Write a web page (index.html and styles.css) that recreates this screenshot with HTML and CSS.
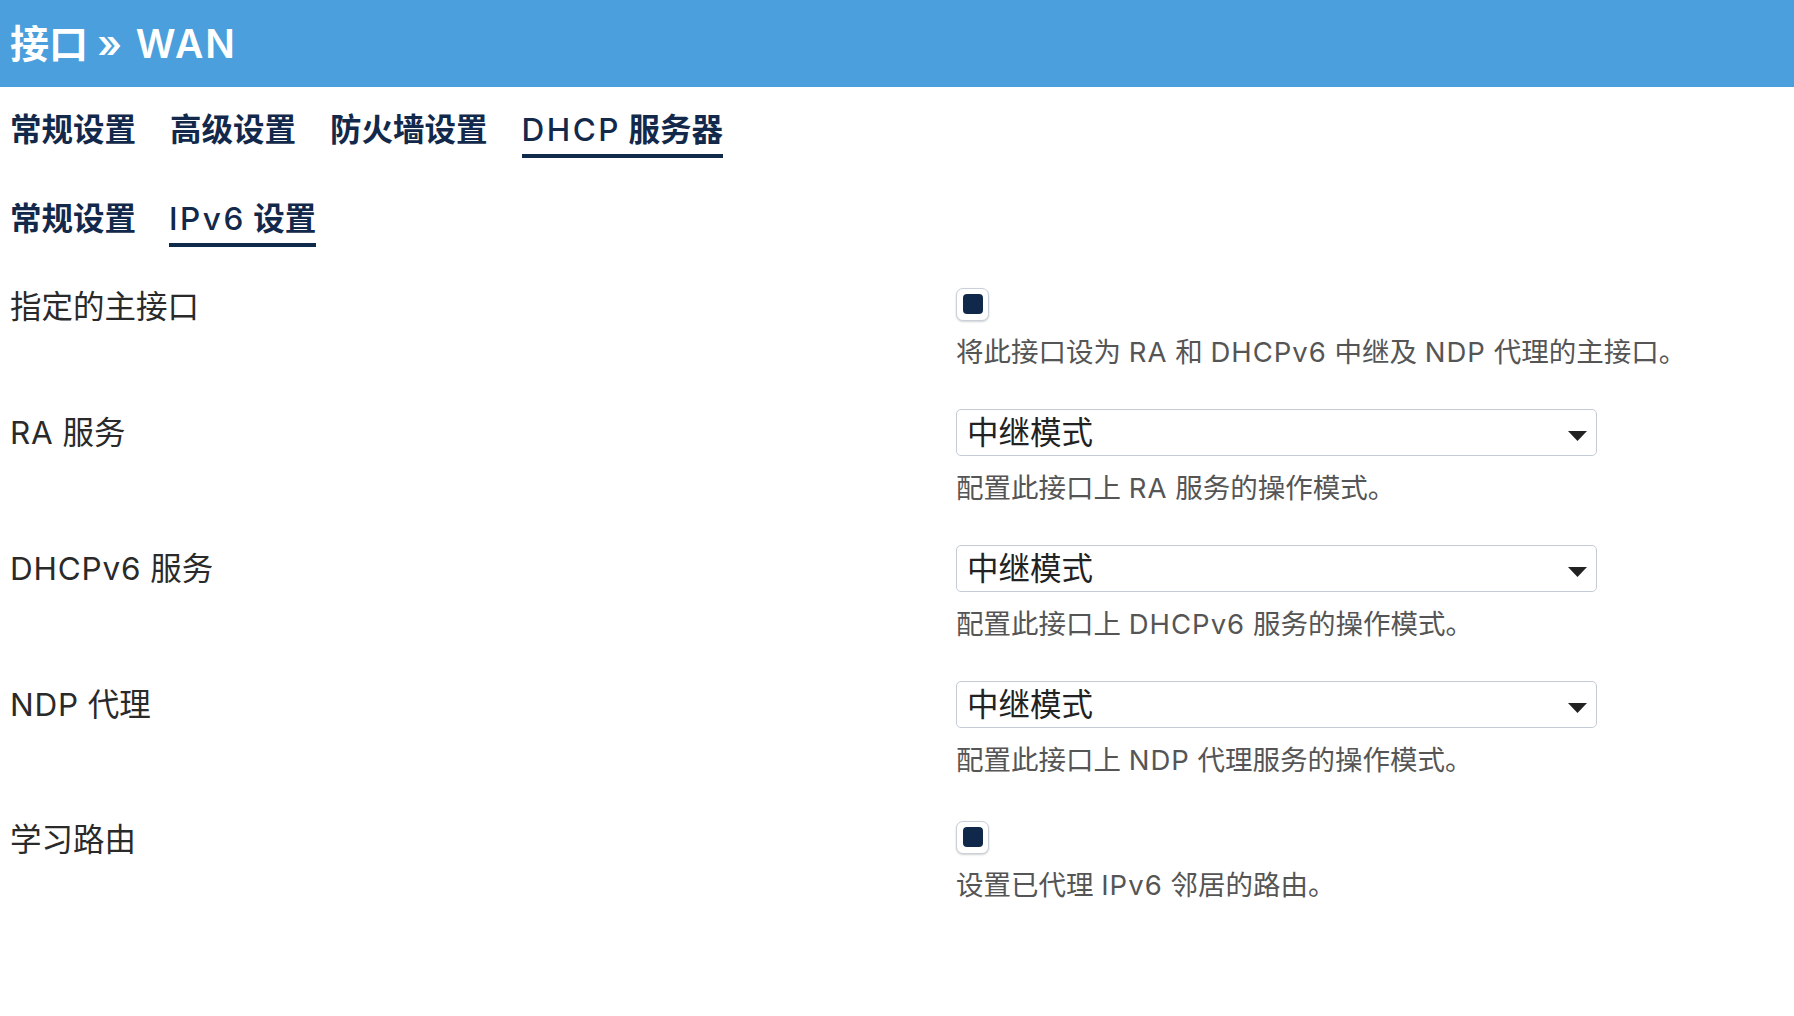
FILE: index.html
```html
<!DOCTYPE html>
<html lang="zh-CN">
<head>
<meta charset="utf-8">
<title>接口 » WAN</title>
<link rel="stylesheet" href="styles.css">
</head>
<body>
<header class="top">
  <h1 class="title">接口 <span class="title-lat">» WAN</span></h1>
</header>
<main class="page">
  <nav class="tabs main-tabs">
    <a class="tab">常规设置</a>
    <a class="tab">高级设置</a>
    <a class="tab">防火墙设置</a>
    <a class="tab active"><span class="lat">DHCP</span> 服务器</a>
  </nav>
  <nav class="tabs sub-tabs">
    <a class="tab">常规设置</a>
    <a class="tab active"><span class="lat">IPv6</span> 设置</a>
  </nav>
  <div class="form">
    <div class="row check-row">
      <div class="label">指定的主接口</div>
      <div class="field">
        <div class="ctl"><span class="checkbox"><span class="tick"></span></span></div>
        <div class="desc">将此接口设为 <span class="dl">RA</span> 和 <span class="dl">DHCPv6</span> 中继及 <span class="dl">NDP</span> 代理的主接口。</div>
      </div>
    </div>
    <div class="row select-row">
      <div class="label"><span class="ll">RA</span> 服务</div>
      <div class="field">
        <div class="select"><span class="select-text">中继模式</span><svg class="arrow" width="19" height="10" viewBox="0 0 19 10"><polygon points="0,0 19,0 9.5,10" fill="#222"/></svg></div>
        <div class="desc sel-desc">配置此接口上 <span class="dl">RA</span> 服务的操作模式。</div>
      </div>
    </div>
    <div class="row select-row">
      <div class="label"><span class="ll">DHCPv6</span> 服务</div>
      <div class="field">
        <div class="select"><span class="select-text">中继模式</span><svg class="arrow" width="19" height="10" viewBox="0 0 19 10"><polygon points="0,0 19,0 9.5,10" fill="#222"/></svg></div>
        <div class="desc sel-desc">配置此接口上 <span class="dl">DHCPv6</span> 服务的操作模式。</div>
      </div>
    </div>
    <div class="row select-row">
      <div class="label"><span class="ll">NDP</span> 代理</div>
      <div class="field">
        <div class="select"><span class="select-text">中继模式</span><svg class="arrow" width="19" height="10" viewBox="0 0 19 10"><polygon points="0,0 19,0 9.5,10" fill="#222"/></svg></div>
        <div class="desc sel-desc">配置此接口上 <span class="dl">NDP</span> 代理服务的操作模式。</div>
      </div>
    </div>
    <div class="row check-row">
      <div class="label">学习路由</div>
      <div class="field">
        <div class="ctl"><span class="checkbox"><span class="tick"></span></span></div>
        <div class="desc">设置已代理 <span class="dl">IPv6</span> 邻居的路由。</div>
      </div>
    </div>
  </div>
</main>
</body>
</html>
```
FILE: styles.css
```css
html, body {
  margin: 0;
  padding: 0;
  background: #fff;
}
body {
  font-family: "Inter", "Noto Sans CJK SC", sans-serif;
  color: #2a2a2a;
}
.top {
  height: 87px;
  background: #4a9fdc;
  display: flex;
  align-items: center;
  padding: 0 10px;
}
.title {
  margin: 0;
  color: #fff;
  font-size: 39px;
  font-weight: 700;
  line-height: 1;
}
.title-lat {
  letter-spacing: 2px;
  font-weight: 600;
}
.page {
  padding: 0 10px;
}
.tabs {
  display: flex;
  gap: 34px;
}
.main-tabs {
  margin-top: 24px;
}
.sub-tabs {
  margin-top: 42px;
  gap: 33px;
}
.tab {
  font-size: 31.5px;
  font-weight: 700;
  line-height: 38px;
  color: #13294b;
  padding-bottom: 5px;
  border-bottom: 4px solid transparent;
  white-space: nowrap;
}
.sub-tabs .tab {
  padding-bottom: 5px;
}
.tab.active {
  border-bottom-color: #0f2a4a;
}
.lat {
  font-weight: 500;
  letter-spacing: 2.5px;
}
.form {
  margin-top: 37px;
}
.row {
  display: grid;
  grid-template-columns: 946px 641px;
  margin-bottom: 38.5px;
}
.label {
  font-size: 31.5px;
  color: #2a2a2a;
  line-height: 40px;
  white-space: nowrap;
}
.check-row .label {
  padding-top: 3px;
}
.ll {
  letter-spacing: 0.8px;
}
.select-row .label {
  line-height: 47px;
}
.ctl {
  height: 40px;
  display: flex;
  align-items: center;
}
.checkbox {
  box-sizing: border-box;
  width: 33px;
  height: 33px;
  border: 1.5px solid #c9d0d9;
  border-radius: 7px;
  background: #fff;
  box-shadow: 0 1px 2px rgba(0, 0, 0, 0.18);
  display: flex;
  align-items: center;
  justify-content: center;
}
.tick {
  width: 20px;
  height: 20px;
  border-radius: 4px;
  background: #10294a;
}
.desc {
  font-size: 27.5px;
  line-height: 38px;
  color: #555;
  margin-top: 8.5px;
  white-space: nowrap;
}
.dl {
  letter-spacing: 1px;
}
.sel-desc {
  margin-top: 12.5px;
}
.select {
  box-sizing: border-box;
  height: 47px;
  border: 1px solid #c4cbd4;
  border-radius: 5px;
  display: flex;
  align-items: center;
  padding: 0 9px 0 10px;
  background: #fff;
}
.select-text {
  font-size: 31.5px;
  color: #222;
  line-height: 45px;
}
.arrow {
  margin-left: auto;
  margin-top: 7px;
}
```
